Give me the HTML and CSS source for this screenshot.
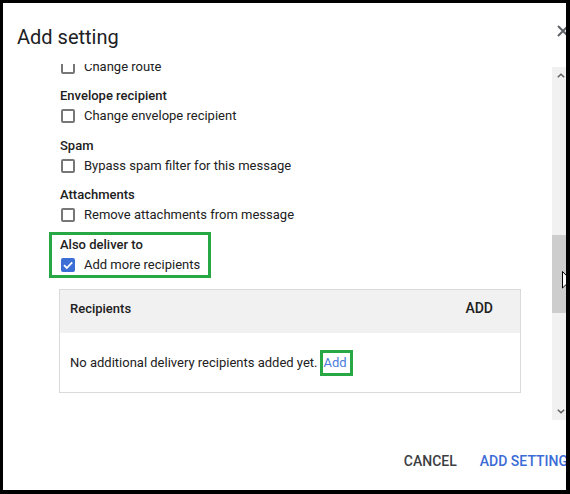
FILE: index.html
```html
<!DOCTYPE html>
<html lang="en">
<head>
<meta charset="utf-8">
<title>Add setting</title>
<link rel="stylesheet" href="styles.css">
</head>
<body>
<div class="frame">
  <div class="dialog">
    <header class="dlg-head">
      <h1 class="dlg-title">Add setting</h1>
      <span class="close" aria-label="Close">
        <svg width="12" height="12" viewBox="0 0 12 12"><path d="M1 1 L11 11 M11 1 L1 11" stroke="#5f6368" stroke-width="2" fill="none"/></svg>
      </span>
    </header>
    <div class="dlg-body">
      <div class="scroll">
        <div class="scroll-inner">
          <div class="group first">
            <div class="check-row"><span class="cb"></span><span>Change route</span></div>
          </div>
          <div class="group">
            <div class="label">Envelope recipient</div>
            <div class="check-row"><span class="cb"></span><span>Change envelope recipient</span></div>
          </div>
          <div class="group">
            <div class="label">Spam</div>
            <div class="check-row"><span class="cb"></span><span>Bypass spam filter for this message</span></div>
          </div>
          <div class="group">
            <div class="label">Attachments</div>
            <div class="check-row"><span class="cb"></span><span>Remove attachments from message</span></div>
          </div>
          <div class="group hl">
            <div class="label">Also deliver to</div>
            <div class="check-row"><span class="cb checked"><svg width="14" height="14" viewBox="0 0 14 14"><path d="M3 7.2 L5.8 10 L11.2 4.4" stroke="#fff" stroke-width="1.8" fill="none"/></svg></span><span>Add more recipients</span></div>
          </div>
          <div class="recipients">
            <div class="rec-head"><span class="rec-title">Recipients</span><span class="rec-add">ADD</span></div>
            <div class="rec-body">No additional delivery recipients added yet.<a class="link-hl">Add</a></div>
          </div>
        </div>
      </div>
      <div class="scrollbar">
        <span class="sb-btn"><svg width="8" height="5" viewBox="0 0 8 5"><path d="M0.8 4.3 L4 1.2 L7.2 4.3" stroke="#606060" stroke-width="1.5" fill="none"/></svg></span>
        <span class="sb-thumb"></span>
        <span class="sb-btn sb-down"><svg width="8" height="5" viewBox="0 0 8 5"><path d="M0.8 0.7 L4 3.8 L7.2 0.7" stroke="#606060" stroke-width="1.5" fill="none"/></svg></span>
      </div>
    </div>
    <footer class="dlg-foot">
      <button class="btn">CANCEL</button>
      <button class="btn primary">ADD SETTING</button>
    </footer>
  </div>
  <svg class="cursor" width="13" height="21" viewBox="0 0 13 21"><path d="M0.5 0.5 L0.5 17 L4.5 13.2 L7.2 19.6 L9.4 18.7 L6.8 12.4 L12 12.4 Z" fill="#fff" stroke="#000" stroke-width="1"/></svg>
</div>
</body>
</html>
```
FILE: styles.css
```css
html, body {
  margin: 0;
  padding: 0;
}
body {
  background: #000;
  width: 570px;
  height: 494px;
  overflow: hidden;
  font-family: Roboto, "Noto Sans", "Liberation Sans", Arial, sans-serif;
}
.frame {
  position: relative;
  margin: 3px 0 0 3px;
  width: 563px;
  height: 487px;
  background: #fff;
  overflow: hidden;
}
.dialog {
  width: 600px;
  height: 487px;
  display: flex;
  flex-direction: column;
  color: #212121;
}
.dlg-head {
  box-sizing: border-box;
  height: 61px;
  padding: 22px 34px 0 14px;
  display: flex;
  align-items: flex-start;
  flex: 0 0 auto;
}
.dlg-title {
  margin: 0;
  font-size: 20px;
  font-weight: 400;
  line-height: 24px;
  color: #202124;
}
.close {
  margin-left: auto;
  margin-top: 0;
  display: flex;
}
.dlg-body {
  height: 356px;
  display: flex;
  flex: 0 0 auto;
}
.scroll {
  flex: 0 0 549px;
  overflow: hidden;
}
.scroll-inner {
  padding-left: 57px;
  margin-top: -7px;
  font-size: 13px;
}
.group {
  margin-bottom: 9.4px;
}
.label {
  line-height: 20px;
  font-weight: 500;
  color: #212121;
}
.check-row {
  display: flex;
  align-items: center;
  height: 20px;
  line-height: 20px;
  color: #212121;
}
.cb {
  box-sizing: border-box;
  width: 14px;
  height: 14px;
  margin-left: 1px;
  margin-right: 9px;
  border: 2px solid #777;
  border-radius: 2px;
  display: flex;
  align-items: center;
  justify-content: center;
}
.cb.checked {
  border: none;
  background: #3c6fd6;
}
.hl {
  width: fit-content;
  border: 3px solid #27a844;
  margin: -3px 0 -3px -11px;
  padding: 0 8px 0 8px;
}
.recipients {
  width: 462px;
  box-sizing: border-box;
  margin: 14px 0 0 -1px;
  border: 1px solid #dadada;
}
.rec-head {
  box-sizing: border-box;
  height: 43px;
  background: #f1f1f1;
  display: flex;
  align-items: flex-start;
  justify-content: space-between;
  padding: 9px 27px 0 10px;
}
.rec-title {
  font-weight: 500;
  line-height: 20px;
}
.rec-add {
  font-size: 14px;
  font-weight: 500;
  line-height: 20px;
  margin-top: -1px;
  color: #212121;
}
.rec-body {
  padding: 20px 10px 19px 10px;
  line-height: 20px;
  color: #212121;
}
.link-hl {
  color: #4b7bdc;
  border: 3px solid #27a844;
  margin-left: 2px;
  padding: 2px 3px 3px 1px;
}
.scrollbar {
  flex: 0 0 17px;
  height: 353px;
  margin-top: 3px;
  background: #f1f1f1;
  display: flex;
  flex-direction: column;
}
.sb-btn {
  height: 17px;
  display: flex;
  align-items: center;
  justify-content: center;
}
.sb-thumb {
  height: 78px;
  margin-top: 151px;
  background: #cdcdcd;
}
.sb-down {
  margin-top: auto;
}
.dlg-foot {
  flex: 1 1 auto;
  display: flex;
  justify-content: flex-end;
  align-items: center;
  padding: 12px 35px 0 0;
  gap: 23px;
}
.btn {
  font-family: Roboto, "Noto Sans", Arial, sans-serif;
  font-size: 14px;
  font-weight: 500;
  line-height: 20px;
  background: none;
  border: none;
  padding: 0;
  color: #3c4043;
  white-space: nowrap;
}
.btn.primary {
  color: #3b6bd6;
}
.cursor {
  position: absolute;
  left: 559px;
  top: 268px;
}
```
